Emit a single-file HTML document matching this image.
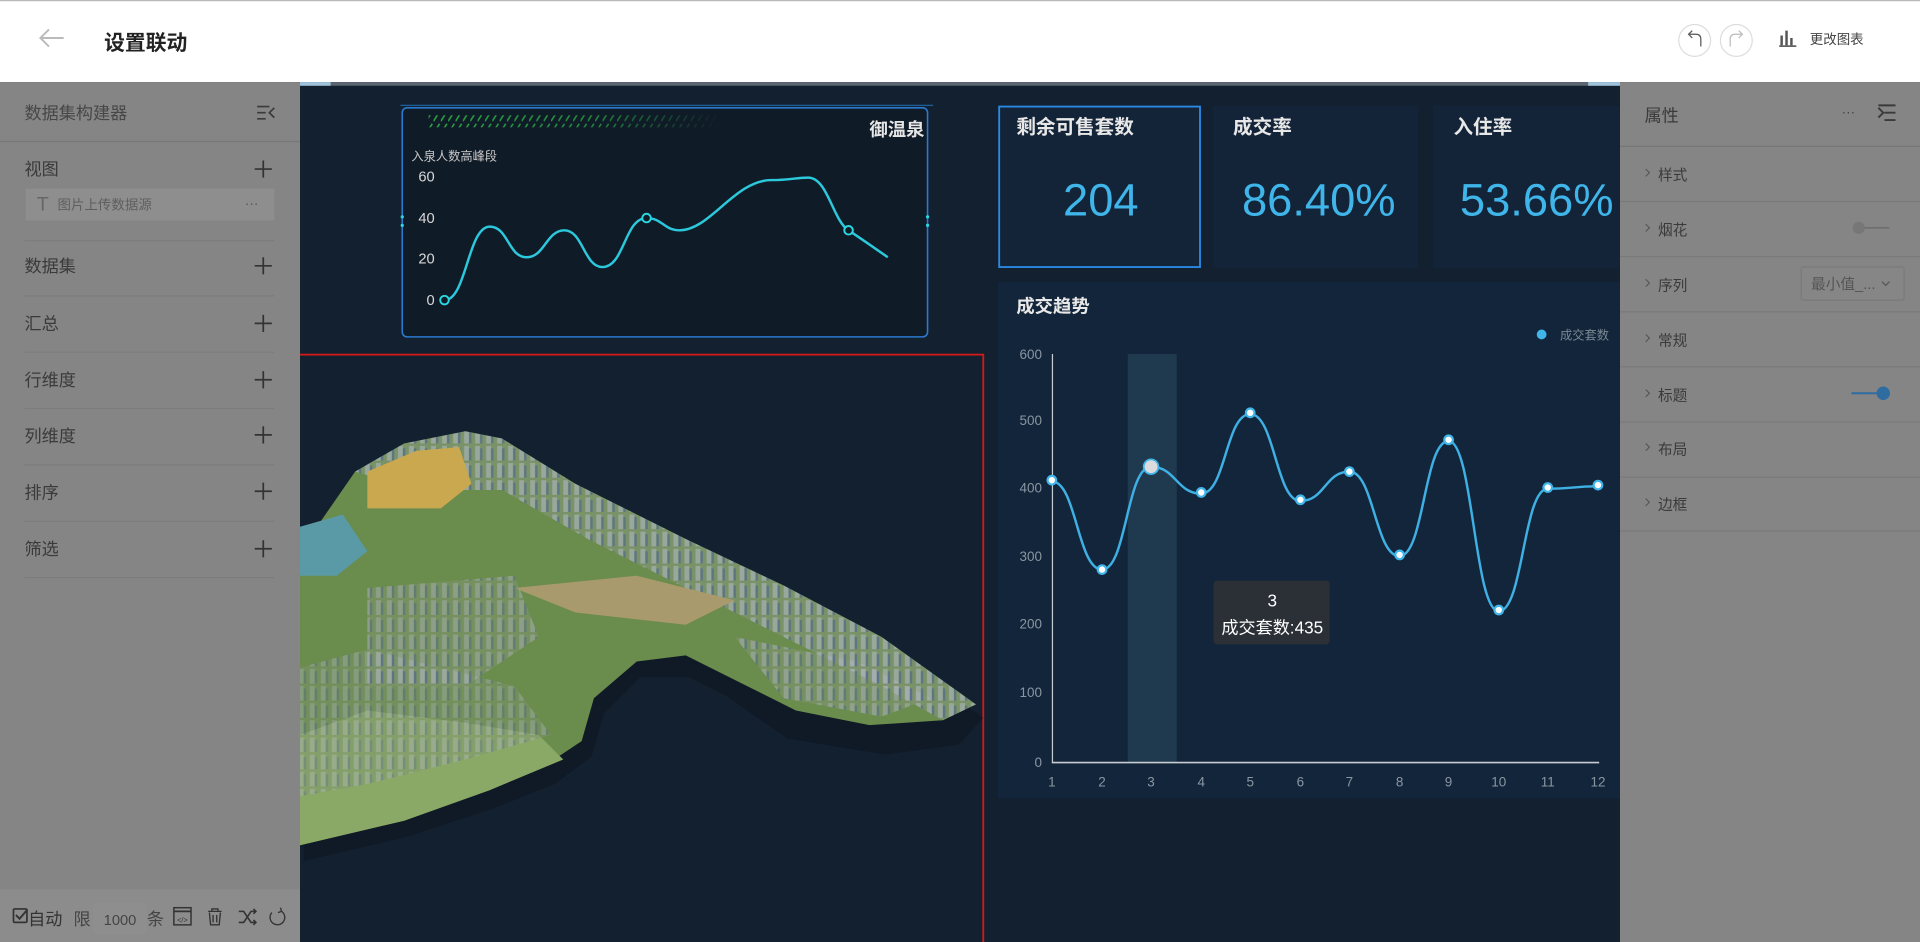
<!DOCTYPE html>
<html><head><meta charset="utf-8">
<style>
html,body{margin:0;padding:0;width:1920px;height:942px;overflow:hidden;background:#13202f}
svg{display:block}
text{font-family:"Liberation Sans","Noto Sans CJK SC",sans-serif}
</style></head>
<body>
<svg width="1920" height="942" viewBox="0 0 1568 769" preserveAspectRatio="none" xmlns="http://www.w3.org/2000/svg">
<defs>
<linearGradient id="hatch" x1="0" x2="1"><stop offset="0" stop-color="#2fbf4a"/><stop offset="0.6" stop-color="#1f8a3a"/><stop offset="1" stop-color="#0f2a22" stop-opacity="0"/></linearGradient>
<pattern id="stripes" width="6" height="10" patternUnits="userSpaceOnUse"><path d="M0,9 L5,1" stroke="#2aa845" stroke-width="1.3"/></pattern>
<linearGradient id="fade" x1="0" x2="1"><stop offset="0" stop-color="#fff"/><stop offset="0.55" stop-color="#fff" stop-opacity="0.8"/><stop offset="1" stop-color="#fff" stop-opacity="0"/></linearGradient>
<mask id="fm"><rect x="350" y="94" width="240" height="10" fill="url(#fade)"/></mask>
<pattern id="bld" width="9" height="14" patternUnits="userSpaceOnUse"><rect width="9" height="14" fill="#7f9470"/><rect x="1" y="0" width="4" height="12" fill="#a9b1b8"/><rect x="5" y="2" width="2" height="10" fill="#5a6f92"/></pattern>
</defs>
<rect x="0" y="0" width="1568" height="769" fill="#13202f"/>
<!-- header -->
<rect x="0" y="0" width="1568" height="67" fill="#fff"/>
<rect x="0" y="0" width="1568" height="1" fill="#b8b8b8"/>
<path d="M34,31 L52,31 M40,24 L33,31 L40,38" stroke="#bbb" stroke-width="1.6" fill="none"/>
<text x="85" y="41" font-size="17" font-weight="bold" fill="#222">设置联动</text>
<circle cx="1384" cy="33" r="13" fill="#fff" stroke="#ddd"/>
<circle cx="1418" cy="33" r="13" fill="#fff" stroke="#ddd"/>
<path d="M1389,38 L1389,32 Q1389,28 1385,28 L1380,28 M1382,25 L1379,28 L1382,31" stroke="#555" stroke-width="1" fill="none"/>
<path d="M1413,38 L1413,32 Q1413,28 1417,28 L1422,28 M1420,25 L1423,28 L1420,31" stroke="#bbb" stroke-width="1" fill="none"/>
<rect x="1454" y="29" width="2" height="8" fill="#555"/><rect x="1458" y="25" width="2" height="12" fill="#555"/><rect x="1462" y="31" width="2" height="6" fill="#555"/><rect x="1453" y="37" width="14" height="1.3" fill="#555"/>
<text x="1478" y="36" font-size="11" fill="#444">更改图表</text>
<rect x="245" y="67" width="1078" height="3" fill="#5b6670"/>
<rect x="245" y="67" width="25" height="3" fill="#9fc3da"/>
<rect x="1297" y="67" width="26" height="3" fill="#9fc3da"/>

<!-- top chart -->
<line x1="327" y1="86" x2="762" y2="86" stroke="#1f5f99" stroke-width="1"/>
<rect x="328.5" y="88" width="429" height="187" rx="4" fill="#101b28" stroke="#2a7ad0" stroke-width="1.3"/>
<rect x="350" y="94" width="240" height="10" fill="url(#stripes)" mask="url(#fm)"/>
<text x="755" y="111" font-size="15" font-weight="bold" fill="#e6e6e6" text-anchor="end">御温泉</text>
<text x="336" y="131" font-size="10" fill="#c8c8c8">入泉人数高峰段</text>
<g font-size="12" fill="#d8d8d8" text-anchor="end">
<text x="355" y="148">60</text><text x="355" y="182">40</text><text x="355" y="215">20</text><text x="355" y="249">0</text></g>
<path d="M363,245 C381,245 382,185 400,185 C415,185 415,210 430,210 C445,210 446,188 461,188 C476,188 477,218 492,218 C510,218 510,178 528,178 C541,178 542,188 555,188 C580,188 600,147 630,147 C645,147 650,145 660,145 C676,145 680,180 693,188 C705,196 715,203 725,210" stroke="#2cc8dc" stroke-width="2" fill="none"/>
<circle cx="363" cy="245" r="3.5" fill="#101b28" stroke="#2cd8e0" stroke-width="1.6"/>
<circle cx="528" cy="178" r="3.5" fill="#101b28" stroke="#2cd8e0" stroke-width="1.6"/>
<circle cx="693" cy="188" r="3.5" fill="#101b28" stroke="#2cd8e0" stroke-width="1.6"/>
<circle cx="328.5" cy="177" r="1.3" fill="#2cd8e0"/><circle cx="328.5" cy="184" r="1.3" fill="#2cd8e0"/>
<circle cx="757.5" cy="177" r="1.3" fill="#2cd8e0"/><circle cx="757.5" cy="184" r="1.3" fill="#2cd8e0"/>

<!-- map red box -->
<rect x="244" y="289.5" width="559" height="485" fill="none" stroke="#d11a1a" stroke-width="1.5"/>
<path d="M245,450 L290,385 L330,362 L380,352 L410,358 L470,395 L560,440 L640,478 L720,520 L800,578 L780,600 L720,608 L640,595 L590,560 L560,545 L520,545 L490,575 L480,610 L450,632 L400,652 L330,675 L245,695 Z" fill="#0d1722" opacity="0.6" transform="translate(3,8)"/>
<path d="M245,450 L290,385 L330,362 L380,352 L410,358 L470,395 L560,440 L640,478 L720,520 L797,575 L770,588 L710,592 L650,580 L610,560 L560,535 L520,540 L485,570 L475,605 L445,625 L400,645 L330,670 L245,690 Z" fill="#6a8c4c"/>
<path d="M290,385 L330,362 L380,352 L410,358 L470,395 L560,440 L640,478 L720,520 L797,575 L770,588 L720,560 L640,520 L560,480 L480,440 L410,400 L340,400 Z" fill="url(#bld)" opacity="0.75"/>
<path d="M300,385 L340,368 L375,365 L385,395 L360,415 L300,415 Z" fill="#c9a850"/>
<path d="M245,430 L280,420 L300,450 L275,470 L245,470 Z" fill="#5a9aa6"/>
<path d="M245,600 L300,580 L380,590 L440,600 L460,620 L400,645 L330,670 L245,690 Z" fill="#8aa866"/>
<path d="M420,480 L520,470 L600,490 L560,510 L470,500 Z" fill="#a89a6c"/>
<path d="M600,520 L700,540 L760,570 L720,585 L640,570 Z" fill="url(#bld)" opacity="0.6"/>
<path d="M300,480 L420,470 L440,520 L380,560 L300,560 Z" fill="url(#bld)" opacity="0.55"/>
<path d="M245,545 L300,530 L420,560 L450,600 L380,620 L300,640 L245,650 Z" fill="url(#bld)" opacity="0.45"/>

<!-- KPI cards -->
<rect x="990" y="86" width="168" height="133" fill="#132438"/>
<rect x="1170" y="86" width="153" height="133" fill="#132438"/>
<rect x="816" y="87" width="164" height="131" fill="#132438" stroke="#2a8ae6" stroke-width="1.5"/>
<g font-size="16" font-weight="bold" fill="#e8e8e8">
<text x="830" y="109">剩余可售套数</text><text x="1007" y="109">成交率</text><text x="1187" y="109">入住率</text></g>
<g font-size="37" fill="#3fb5ea" text-anchor="middle">
<text x="899" y="176">204</text><text x="1077" y="176">86.40%</text><text x="1255" y="176">53.66%</text></g>

<!-- trend panel -->
<rect x="815" y="230" width="508" height="422" fill="#12253a"/>
<text x="830" y="255" font-size="15" font-weight="bold" fill="#e8e8e8">成交趋势</text>
<circle cx="1259" cy="273" r="4" fill="#3fb5ea"/>
<text x="1274" y="277" font-size="10" fill="#7b8894">成交套数</text>
<rect x="921" y="289" width="40" height="333" fill="#2a4a60" opacity="0.55"/>
<g font-size="11" fill="#8a96a2" text-anchor="end">
<text x="851" y="293">600</text><text x="851" y="347">500</text><text x="851" y="402">400</text><text x="851" y="458">300</text><text x="851" y="513">200</text><text x="851" y="569">100</text><text x="851" y="626">0</text></g>
<line x1="859.5" y1="289" x2="859.5" y2="623" stroke="#c8cdd2" stroke-width="1"/>
<line x1="859" y1="622.5" x2="1306" y2="622.5" stroke="#c8cdd2" stroke-width="1.3"/>
<g font-size="11" fill="#8a96a2" text-anchor="middle">
<text x="859" y="642">1</text><text x="900" y="642">2</text><text x="940" y="642">3</text><text x="981" y="642">4</text><text x="1021" y="642">5</text><text x="1062" y="642">6</text><text x="1102" y="642">7</text><text x="1143" y="642">8</text><text x="1183" y="642">9</text><text x="1224" y="642">10</text><text x="1264" y="642">11</text><text x="1305" y="642">12</text></g>
<path d="M859,393 C879,393 880,465 900,465 C920,465 920,381 940,381 C960,381 961,403 981,403 C1001,403 1001,338 1021,338 C1041,338 1042,409 1062,409 C1082,409 1082,385 1102,385 C1122,385 1123,454 1143,454 C1163,454 1163,360 1183,360 C1203,360 1204,499 1224,499 C1244,499 1244,399 1264,399 C1284,399 1285,397 1305,397" stroke="#3fb0e4" stroke-width="2" fill="none"/>
<g fill="#fff" stroke="#3fb5ea" stroke-width="1.8">
<circle cx="859" cy="392" r="3.5"/><circle cx="900" cy="465" r="3.5"/><circle cx="981" cy="402" r="3.5"/><circle cx="1021" cy="337" r="3.5"/><circle cx="1062" cy="408" r="3.5"/><circle cx="1102" cy="385" r="3.5"/><circle cx="1143" cy="453" r="3.5"/><circle cx="1183" cy="359" r="3.5"/><circle cx="1224" cy="498" r="3.5"/><circle cx="1264" cy="398" r="3.5"/><circle cx="1305" cy="396" r="3.5"/></g>
<circle cx="940" cy="381" r="6" fill="#dcdcdc" stroke="#3fb5ea" stroke-width="1.5"/>
<rect x="991" y="474" width="95" height="52" rx="3" fill="#2b2f36"/>
<text x="1039" y="495" font-size="14" fill="#fff" text-anchor="middle">3</text>
<text x="1039" y="517" font-size="14" fill="#fff" text-anchor="middle">成交套数:435</text>

<!-- left panel -->
<rect x="0" y="67" width="245" height="702" fill="#858585"/>
<rect x="0" y="726" width="245" height="43" fill="#8c8c8c"/>
<g font-size="14" fill="#3a3a3a">
<text x="20" y="97" fill="#474747">数据集构建器</text>
<text x="20" y="143">视图</text>
<text x="20" y="222">数据集</text>
<text x="20" y="269">汇总</text>
<text x="20" y="315">行维度</text>
<text x="20" y="361">列维度</text>
<text x="20" y="407">排序</text>
<text x="20" y="453">筛选</text></g>
<path d="M210,87 L220,87 M210,92 L217,92 M210,97 L217,97 M224,88 L220,92 L224,96" stroke="#3a3a3a" stroke-width="1.4" fill="none"/>
<line x1="0" y1="115.5" x2="245" y2="115.5" stroke="#777"/>
<g stroke="#333" stroke-width="1.4">
<path d="M208,138 L222,138 M215,131 L215,145"/><path d="M208,217 L222,217 M215,210 L215,224"/><path d="M208,264 L222,264 M215,257 L215,271"/><path d="M208,310 L222,310 M215,303 L215,317"/><path d="M208,355 L222,355 M215,348 L215,362"/><path d="M208,401 L222,401 M215,394 L215,408"/><path d="M208,448 L222,448 M215,441 L215,455"/></g>
<rect x="21" y="154" width="203" height="26" fill="#8e8e8e"/>
<text x="30" y="172" font-size="16" font-family="Liberation Serif" fill="#666">T</text>
<text x="47" y="171" font-size="11" fill="#5e5e5e">图片上传数据源</text>
<text x="200" y="170" font-size="11" fill="#555">···</text>
<g stroke="#7c7c7c"><line x1="20" y1="196.5" x2="224" y2="196.5"/><line x1="20" y1="241.5" x2="224" y2="241.5"/><line x1="20" y1="287.5" x2="224" y2="287.5"/><line x1="20" y1="333.5" x2="224" y2="333.5"/><line x1="20" y1="379.5" x2="224" y2="379.5"/><line x1="20" y1="425.5" x2="224" y2="425.5"/><line x1="20" y1="471.5" x2="224" y2="471.5"/></g>
<rect x="11" y="742" width="11" height="11" fill="none" stroke="#333" stroke-width="1.4" rx="1"/>
<path d="M13,747 L16,750 L22,743" stroke="#333" stroke-width="1.6" fill="none"/>
<text x="23" y="755" font-size="14" fill="#333">自动</text>
<text x="60" y="755" font-size="14" fill="#444">限</text>
<rect x="76" y="737" width="44" height="26" rx="3" fill="#8e8e8e"/>
<text x="98" y="755" font-size="12" fill="#444" text-anchor="middle">1000</text>
<text x="120" y="755" font-size="14" fill="#444">条</text>
<rect x="142" y="741" width="14" height="14" fill="none" stroke="#333" stroke-width="1.2"/><line x1="142" y1="744" x2="156" y2="744" stroke="#333" stroke-width="1.5"/>
<text x="149" y="753" font-size="6" fill="#333" text-anchor="middle">&lt;/&gt;</text>
<path d="M170,744 L181,744 M173,744 L173,742 L178,742 L178,744 M171,745 L172,755 L179,755 L180,745 M174,747 L174,753 M177,747 L177,753" stroke="#333" stroke-width="1.1" fill="none"/>
<path d="M195,744 L199,744 L205,753 L209,753 M195,753 L199,753 L205,744 L209,744 M207,742 L209,744 L207,746 M207,751 L209,753 L207,755" stroke="#333" stroke-width="1.3" fill="none"/>
<path d="M230,744 A6,6 0 1 1 222,745 M229,741 L230,744 L227,745" stroke="#333" stroke-width="1.1" fill="none"/>

<!-- right panel -->
<rect x="1323" y="67" width="245" height="702" fill="#858585"/>
<text x="1343" y="99" font-size="14" fill="#3a3a3a">属性</text>
<text x="1504" y="95" font-size="11" fill="#444">···</text>
<path d="M1534,86 L1548,86 M1539,92 L1548,92 M1539,98 L1548,98 M1534,88 L1538,92 L1534,96" stroke="#3a3a3a" stroke-width="1.6" fill="none"/>
<line x1="1323" y1="119.5" x2="1568" y2="119.5" stroke="#777"/>
<g font-size="12" fill="#3a3a3a">
<text x="1354" y="147">样式</text><text x="1354" y="192">烟花</text><text x="1354" y="237">序列</text><text x="1354" y="282">常规</text><text x="1354" y="327">标题</text><text x="1354" y="371">布局</text><text x="1354" y="416">边框</text></g>
<g stroke="#555" stroke-width="0.9" fill="none">
<path d="M1344,138 L1347,141 L1344,144"/><path d="M1344,183 L1347,186 L1344,189"/><path d="M1344,228 L1347,231 L1344,234"/><path d="M1344,273 L1347,276 L1344,279"/><path d="M1344,318 L1347,321 L1344,324"/><path d="M1344,362 L1347,365 L1344,368"/><path d="M1344,407 L1347,410 L1344,413"/></g>
<g stroke="#7a7a7a"><line x1="1323" y1="164.5" x2="1568" y2="164.5"/><line x1="1323" y1="209.5" x2="1568" y2="209.5"/><line x1="1323" y1="254.5" x2="1568" y2="254.5"/><line x1="1323" y1="299.5" x2="1568" y2="299.5"/><line x1="1323" y1="344.5" x2="1568" y2="344.5"/><line x1="1323" y1="389.5" x2="1568" y2="389.5"/><line x1="1323" y1="433.5" x2="1568" y2="433.5"/></g>
<line x1="1518" y1="186" x2="1543" y2="186" stroke="#6e6e6e" stroke-width="1.3"/>
<circle cx="1518" cy="186" r="5" fill="#777"/>
<rect x="1471" y="218" width="84" height="27" rx="2" fill="#868686" stroke="#7a7a7a"/>
<text x="1479" y="236" font-size="12" fill="#555">最小值_...</text>
<path d="M1537,230 L1540,233 L1543,230" stroke="#555" fill="none"/>
<line x1="1512" y1="321" x2="1537" y2="321" stroke="#2f6da0" stroke-width="1.6"/>
<circle cx="1538" cy="321" r="5.5" fill="#2f6da0"/>
</svg>
</body></html>
